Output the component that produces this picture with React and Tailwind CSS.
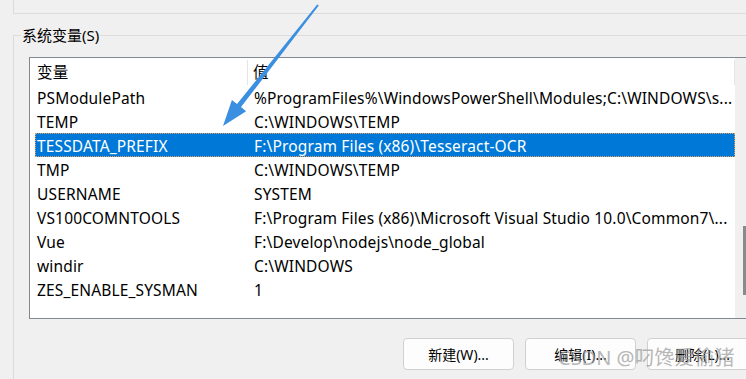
import React from 'react';

const rows = [
  ['PSModulePath', '%ProgramFiles%\\WindowsPowerShell\\Modules;C:\\WINDOWS\\s...'],
  ['TEMP', 'C:\\WINDOWS\\TEMP'],
  ['TESSDATA_PREFIX', 'F:\\Program Files (x86)\\Tesseract-OCR'],
  ['TMP', 'C:\\WINDOWS\\TEMP'],
  ['USERNAME', 'SYSTEM'],
  ['VS100COMNTOOLS', 'F:\\Program Files (x86)\\Microsoft Visual Studio 10.0\\Common7\\...'],
  ['Vue', 'F:\\Develop\\nodejs\\node_global'],
  ['windir', 'C:\\WINDOWS'],
  ['ZES_ENABLE_SYSMAN', '1'],
];

const font = { fontFamily: '"Noto Sans", "Noto Sans CJK SC", sans-serif' };

function Arrow() {
  return (
    <svg className="absolute left-0 top-0 pointer-events-none" width="746" height="379">
      <polygon
        points="317.2,4.4 237,104.1 231.9,100 223,126 246.1,111.2 241,107.1 318.8,5.6"
        fill="#3b8fe0"
      />
    </svg>
  );
}

export default function App() {
  return (
    <div
      className="relative w-[746px] h-[379px] overflow-hidden bg-[#f0f0f0] text-[15px] text-black"
      style={font}
    >
      {/* bottom of the previous group */}
      <div className="ml-[13px] h-[14px] border-l border-b border-[#dcdcdc]" />

      {/* system variables group */}
      <div className="mt-[11px] flex h-[20px]">
        <div className="ml-[13px] mt-[10px] w-[8px] border-t border-l border-[#dcdcdc]" />
        <span className="leading-[20px] px-[1px]">系统变量(S)</span>
        <div className="mt-[10px] flex-1 border-t border-[#dcdcdc]" />
      </div>
      <div className="ml-[13px] h-[334px] border-l border-[#dcdcdc] pl-[15px] pt-[12px]">
        <div className="flex w-[740px] h-[262px] border border-[#828790] bg-white">
          <div className="w-[705px] flex flex-col text-[15.5px] tracking-[0.15px]">
            <div className="flex h-[27px] items-center pt-[2px]">
              <div className="ml-[5px] w-[213px] pl-[2px] h-full flex items-center border-r border-[#e5e5e5]">变量</div>
              <div className="pl-[5px] flex-1 h-full flex items-center border-r border-[#e5e5e5]">值</div>
            </div>
            {rows.map(([k, v], i) => {
              const sel = i === 2;
              return (
                <div
                  key={k}
                  className={
                    'ml-[5px] flex h-[24px] items-center pt-[3px] whitespace-nowrap ' +
                    (sel ? 'bg-[#0078d7] text-white outline-1 outline-dotted outline-[#e8a060] -outline-offset-1' : '')
                  }
                >
                  <div className="w-[217px] shrink-0 pl-[2px]">{k}</div>
                  <div className="pl-[2px]">{v}</div>
                </div>
              );
            })}
          </div>
          <div className="flex-1 bg-[#f0f0f0] flex pl-[8px] pt-[168px]">
            <div className="w-[6px] h-[69px] bg-[#8a8a8a]" />
          </div>
        </div>

        <div className="mt-[19px] flex gap-[11px] pl-[374px] text-[14px]">
          {['新建(W)...', '编辑(I)...', '删除(L)...'].map((t) => (
            <div
              key={t}
              className="shrink-0 w-[111px] h-[32px] flex items-center justify-center rounded-[4px] border border-[#d0d0d0] bg-[#fdfdfd]"
            >
              {t}
            </div>
          ))}
        </div>
      </div>

      <Arrow />
      <div className="absolute left-[558px] top-[346px] text-[20px] leading-[24px] text-[#9a9a9a] opacity-70 pointer-events-none whitespace-nowrap">
        CSDN @叼馋爱偷猪
      </div>
    </div>
  );
}
